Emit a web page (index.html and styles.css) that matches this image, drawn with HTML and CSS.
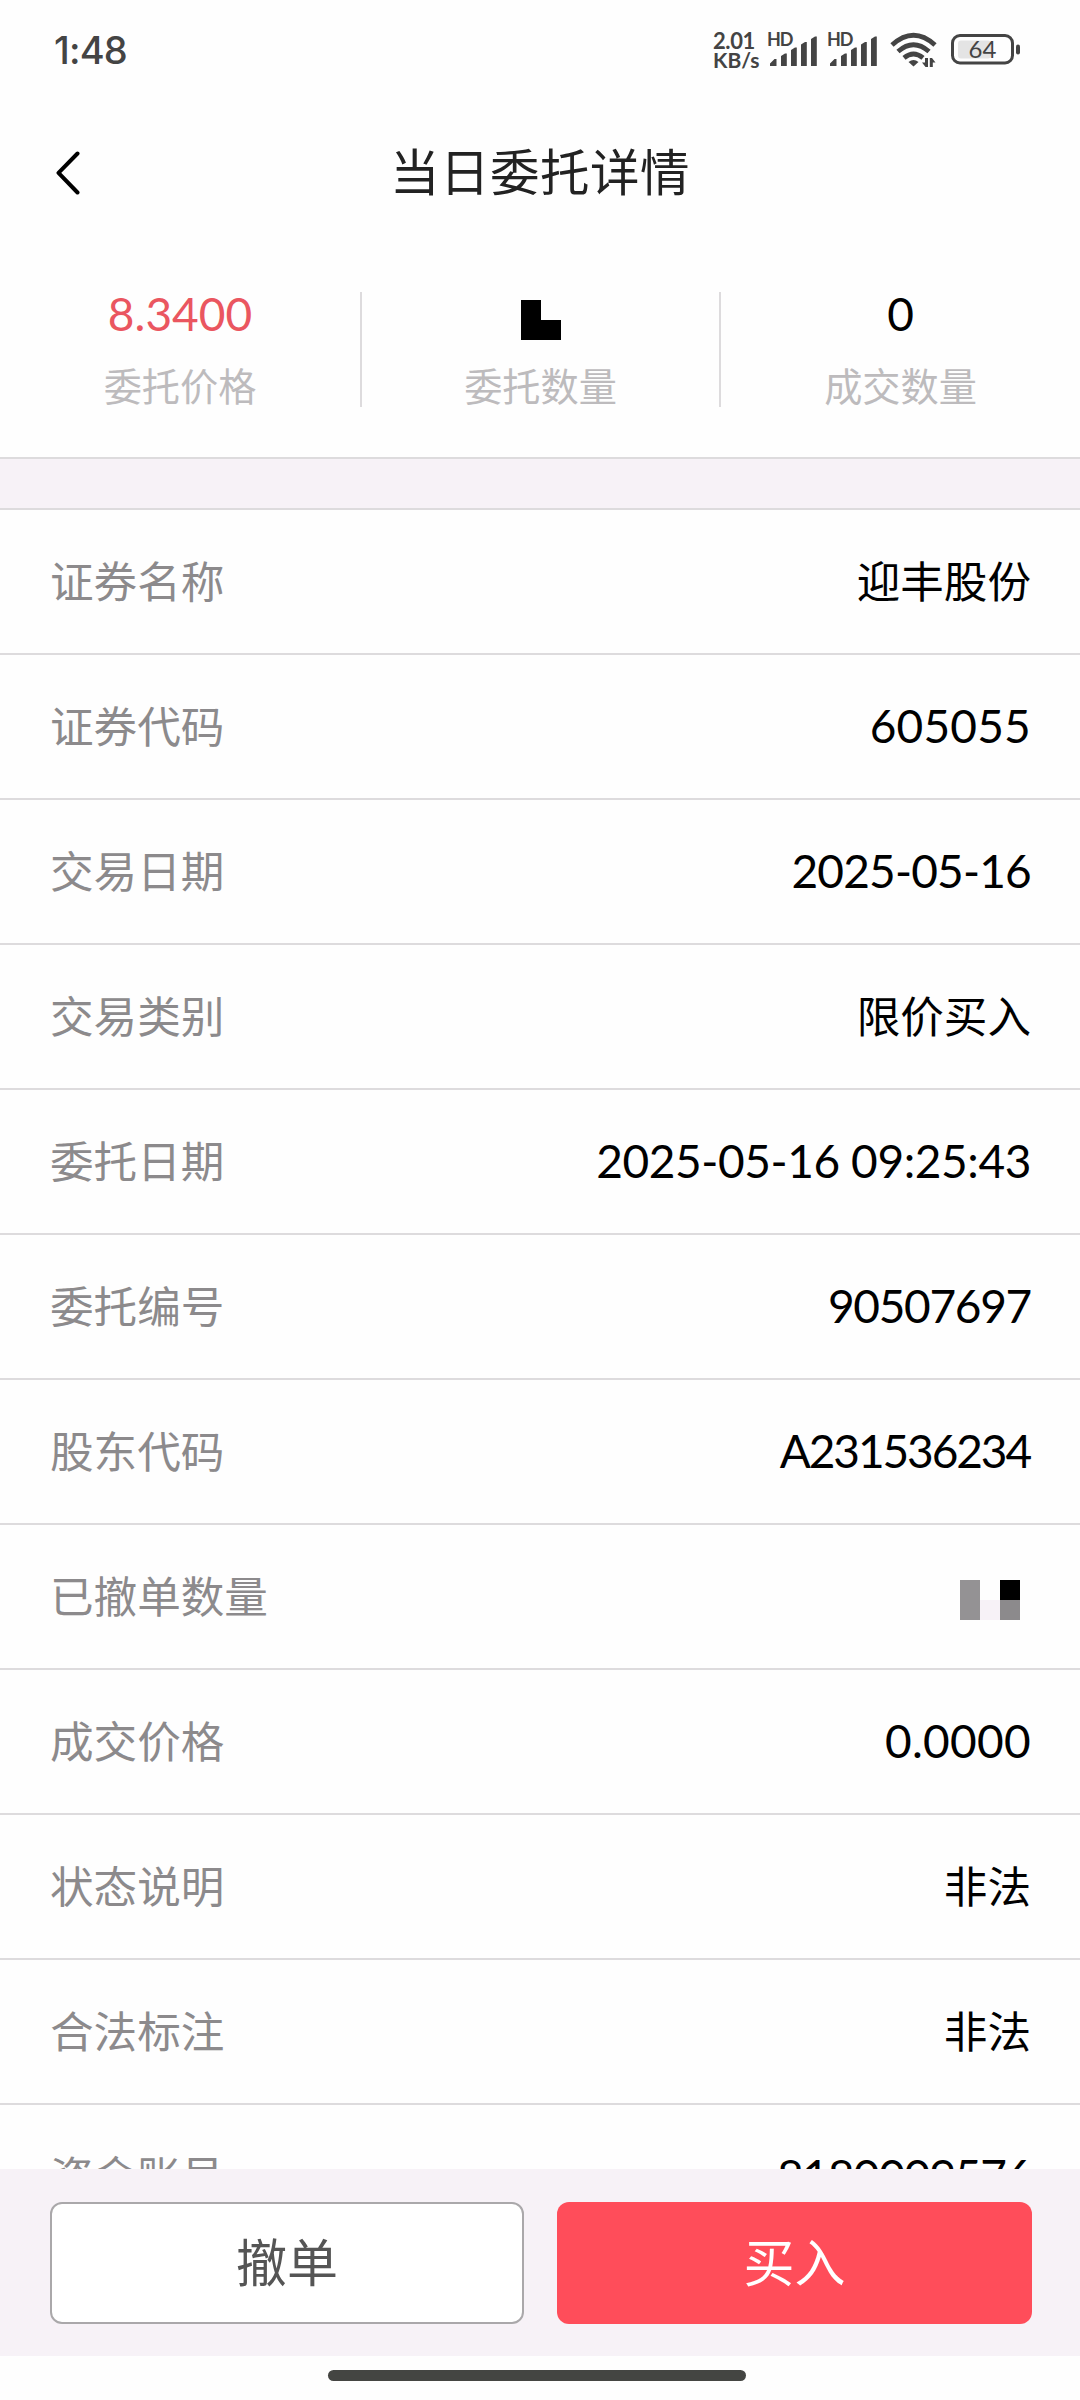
FILE: index.html
```html
<!DOCTYPE html>
<html lang="zh-CN">
<head>
<meta charset="utf-8">
<title>当日委托详情</title>
<link rel="stylesheet" href="styles.css">
</head>
<body>
<div class="screen">
  <div class="status">
    <span class="clock">1:48</span>
    <div class="indicators">
      <div class="speed"><span class="rate">2.01</span><span class="unit">KB/s</span></div>
      <svg class="signal" width="52" height="36" viewBox="0 0 52 36">
        <text x="0" y="13.500" class="hd">HD</text>
        <path d="M3 34V31.500L7.500 27H9.500V34ZM14 34V24L18 21.500H19.800V34ZM24 34V18L28 15.500H29.800V34ZM34 34V12.500L38 10H39.800V34ZM44 34V7L48 4.500H49.800V34Z"/>
      </svg>
      <svg class="signal" width="52" height="36" viewBox="0 0 52 36">
        <text x="0" y="13.500" class="hd">HD</text>
        <path d="M3 34V31.500L7.500 27H9.500V34ZM14 34V24L18 21.500H19.800V34ZM24 34V18L28 15.500H29.800V34ZM34 34V12.500L38 10H39.800V34ZM44 34V7L48 4.500H49.800V34Z"/>
      </svg>
      <svg class="wifi" width="48" height="36" viewBox="0 0 48 36">
        <g fill="none" stroke="#444" stroke-width="4.800">
          <path d="M2 13Q23.500 -6.500 45 13"/>
          <path d="M8 19.500Q23.500 6 39 19.500"/>
          <path d="M14 25.800Q23.500 18 33 25.800"/>
        </g>
        <path fill="#444" d="M18.500 30Q23.500 26 28.500 30L23.500 34.500Z"/>
        <path fill="#444" d="M35 26H38V35H35.500L32 30.500H35ZM39.800 35V26H42L45.500 30.500H42.800V35Z"/>
      </svg>
      <svg class="battery" width="70" height="32" viewBox="0 0 70 32">
        <rect x="7" y="6.500" width="33" height="18" rx="3" fill="#e4e4e4"/>
        <rect x="1.500" y="1.500" width="60" height="27.500" rx="7.500" fill="none" stroke="#444" stroke-width="3"/>
        <rect x="65" y="10.500" width="4" height="10" rx="2" fill="#444"/>
        <text x="31.500" y="24" class="level">64</text>
      </svg>
    </div>
  </div>

  <header class="bar">
    <svg class="back" width="26" height="46" viewBox="0 0 26 46"><path d="M23.500 3.500L4.500 22.800L23.500 42.500"/></svg>
    <h1>当日委托详情</h1>
  </header>

  <section class="summary">
    <div class="stat"><span class="figure price">8.3400</span><span class="caption">委托价格</span></div>
    <div class="stat"><span class="figure"><svg class="mask" width="40" height="40"><path d="M0 0H20V20H40V40H0Z"/></svg></span><span class="caption">委托数量</span></div>
    <div class="stat"><span class="figure">0</span><span class="caption">成交数量</span></div>
  </section>
  <div class="spacer"></div>

  <main class="list">
    <div class="row"><span class="label">证券名称</span><span class="value">迎丰股份</span></div>
    <div class="row"><span class="label">证券代码</span><span class="value num code">605055</span></div>
    <div class="row"><span class="label">交易日期</span><span class="value num date">2025-05-16</span></div>
    <div class="row"><span class="label">交易类别</span><span class="value">限价买入</span></div>
    <div class="row"><span class="label">委托日期</span><span class="value num stamp">2025-05-16 09:25:43</span></div>
    <div class="row"><span class="label">委托编号</span><span class="value num serial">90507697</span></div>
    <div class="row"><span class="label">股东代码</span><span class="value num holder">A231536234</span></div>
    <div class="row"><span class="label">已撤单数量</span><svg class="mask blocks" width="60" height="40"><path fill="#949294" d="M0 0H20V40H0Z"/><path fill="#f7f2f7" d="M20 20H40V40H20Z"/><path d="M40 0H60V20H40Z"/><path fill="#8c8a8c" d="M40 20H60V40H40Z"/></svg></div>
    <div class="row"><span class="label">成交价格</span><span class="value num amount">0.0000</span></div>
    <div class="row"><span class="label">状态说明</span><span class="value">非法</span></div>
    <div class="row"><span class="label">合法标注</span><span class="value">非法</span></div>
    <div class="row"><span class="label">资金账号</span><span class="value num account">8180009576</span></div>
  </main>

  <footer class="actions">
    <button class="btn cancel">撤单</button>
    <button class="btn buy">买入</button>
  </footer>
  <div class="nav"><div class="pill"></div></div>
</div>
</body>
</html>
```
FILE: styles.css
```css
* { box-sizing: border-box; }

body {
  margin: 0;
  background: #fefefe;
  color: #000;
  font-family: Lato, "Noto Sans CJK SC", sans-serif;
}

.screen {
  width: 1080px;
  height: 2400px;
  display: flex;
  flex-direction: column;
  overflow: hidden;
}

.status {
  flex: none;
  height: 100px;
  padding: 0 59px 0 54px;
  display: flex;
  justify-content: space-between;
  align-items: center;
  color: #444;
}
.clock {
  font: 500 38px/44px Inter, sans-serif;
  letter-spacing: -0.8px;
}
.indicators { display: flex; align-items: flex-start; height: 36px; }
.speed {
  width: 54px;
  display: flex;
  flex-direction: column;
  font-weight: 700;
  line-height: 18.5px;
}
.rate { font-size: 22px; letter-spacing: -0.4px; }
.unit { font-size: 21px; }
.signal { margin-right: 8px; fill: #444; overflow: visible; }
.hd { font: 700 18px Lato, sans-serif; letter-spacing: -1.2px; fill: #444; }
.wifi { margin-left: 3px; margin-right: 13px; }
.battery { margin-top: 2px; }
.level { font: 400 24px Lato, sans-serif; fill: #444; text-anchor: middle; }

.bar {
  flex: none;
  height: 145px;
  padding: 0 54px;
  display: grid;
  grid-template-columns: 60px 1fr 60px;
  align-items: center;
}
.back { fill: none; stroke: #000; stroke-width: 4; stroke-linecap: round; stroke-linejoin: round; }
h1 {
  margin: 0;
  padding-bottom: 2px;
  color: #222;
  font-size: 49.500px;
  font-weight: 400;
  line-height: 58px;
  letter-spacing: 0.5px;
  text-align: center;
}

.summary {
  flex: none;
  height: 214px;
  padding-top: 47px;
  border-bottom: 2px solid #dddbdd;
  display: grid;
  grid-template-columns: 360px 359px 361px;
}
.stat {
  height: 115px;
  display: flex;
  flex-direction: column;
  align-items: center;
}
.stat + .stat { border-left: 2px solid #dddbdd; }
.figure {
  flex: none;
  height: 64px;
  font-size: 46px;
  line-height: 43px;
}
.figure .mask { display: block; margin-top: 8px; }
.price { color: #ea5660; }
.caption {
  flex: none;
  color: #bdbbbd;
  font-size: 38.200px;
  line-height: 60px;
}

.spacer {
  flex: none;
  height: 51px;
  background: #f7f2f7;
  border-bottom: 2px solid #dddbdd;
}

.list { flex: 1; min-height: 0; overflow: hidden; }
.row {
  height: 145px;
  padding: 0 49px 0 50px;
  border-bottom: 2px solid #dddbdd;
  display: flex;
  justify-content: space-between;
  align-items: center;
}
.label, .value { font-size: 43.600px; line-height: 64px; padding-bottom: 2px; }
.label { color: #8c8a8c; }
.num { font-size: 46px; padding-bottom: 1px; }
.code { letter-spacing: 0.2px; }
.date { letter-spacing: -0.8px; }
.stamp { letter-spacing: -0.4px; }
.serial { letter-spacing: -1.3px; }
.holder { letter-spacing: -2.1px; padding-right: 1px; }
.amount { letter-spacing: 0.3px; }
.account { letter-spacing: -1.3px; }
.blocks { margin: 6px 11px 0 0; }

.actions {
  flex: none;
  height: 187px;
  padding: 33px 48px 0 50px;
  background: #f7f2f7;
  display: grid;
  grid-template-columns: 474px 475px;
  column-gap: 33px;
}
.btn {
  height: 122px;
  padding: 0;
  border-radius: 12px;
  font-family: inherit;
  font-size: 51px;
  line-height: 60px;
}
.cancel { background: #fff; border: 2px solid #aaa8aa; color: #555; }
.buy { background: #ff4d5a; border: 0; color: #fff; }

.nav { flex: none; height: 44px; display: flex; justify-content: center; padding: 14px 6px 0 0; }
.pill { width: 418px; height: 11px; border-radius: 6px; background: #444542; }
```
